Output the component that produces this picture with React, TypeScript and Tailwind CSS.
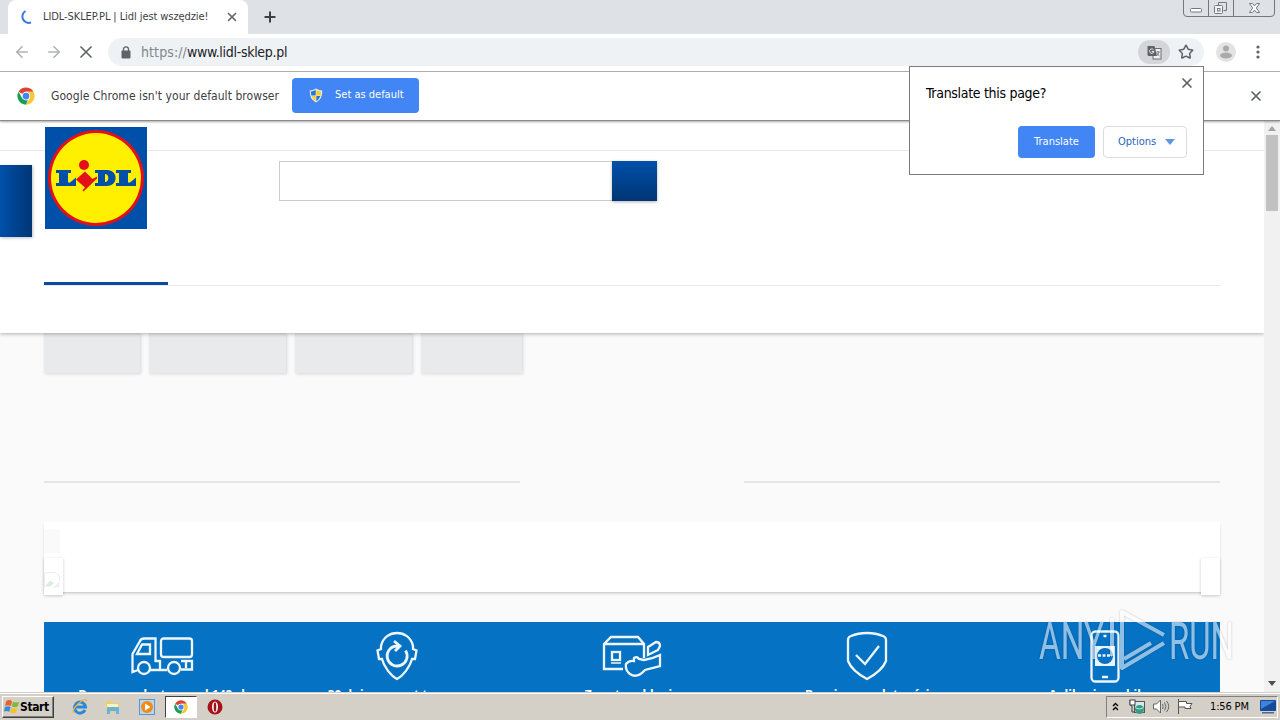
import * as React from "react";
import { X, Plus, ArrowLeft, ArrowRight, Star } from "lucide-react";

function ChromeLogo({ size }: { size: number }) {
  return (
    <svg width={size} height={size} viewBox="0 0 48 48" className="shrink-0">
      <circle cx="24" cy="24" r="23" fill="#fff" />
      <path d="M24 24 4.1 12.5A23 23 0 0 1 43.9 12.5H24Z" fill="#db4437" />
      <path d="M24 12.5h19.9A23 23 0 0 1 24 47l10-17.3Z" fill="#fbc62f" />
      <path d="M4.1 12.5 14 29.7l10 5.8 5-1L24 47A23 23 0 0 1 4.1 12.5Z" fill="#1a9c58" />
      <circle cx="24" cy="24" r="11.5" fill="#fff" />
      <circle cx="24" cy="24" r="9" fill="#4486f4" />
    </svg>
  );
}

function TabStrip() {
  return (
    <div className="flex h-[34px] shrink-0 items-start bg-[#dee1e6] pl-2">
      <div className="flex h-[34px] w-[240px] items-center rounded-t-lg bg-white pl-3">
        <svg width="14" height="16" viewBox="0 0 14 16" className="shrink-0" fill="none">
          <path d="M5.500 2A6.400 6.400 0 0 0 11 13.500" stroke="#3b78e7" strokeWidth="2" />
        </svg>
        <span className="ml-[9px] w-[166px] text-[11px] tracking-[-0.08px] whitespace-nowrap text-[#3c4043]">
          LIDL-SKLEP.PL | Lidl jest wszędzie!
        </span>
        <X className="ml-[16px] size-3.5 text-[#5f6368]" strokeWidth={2.6} />
      </div>
      <Plus className="mt-[9px] ml-[14px] size-4 text-[#3c4043]" strokeWidth={3} />
      <svg width="94" height="18" className="mr-[4px] ml-auto" fill="none" stroke="#74787f">
        <path d="M1.500 0v13q0 3.500 3.500 3.500h84q3.500 0 3.500-3.500V0M26.500 0v16M51.500 0v16" />
        <rect x="8.500" y="8.500" width="11" height="3.500" rx="1" fill="#fff" />
        <path d="M36.500 5.500v-3h8v8h-3" />
        <rect x="32.500" y="5.500" width="8" height="8" rx="1" fill="#f4f5f7" />
        <rect x="35.500" y="8.500" width="2.500" height="2.500" />
        <path d="M67.500 3.500h3l2 2.500 2-2.500h3l-3.200 4.500 3.200 4.500h-3l-2-2.500-2 2.500h-3l3.200-4.500Z" fill="#fff" />
      </svg>
    </div>
  );
}

function Toolbar() {
  return (
    <div className="flex h-[38px] shrink-0 items-center border-b border-[#b3b3b3] bg-white pb-px pl-[13px]">
      <ArrowLeft className="size-[18px] text-[#b0b2b5]" strokeWidth={2.2} />
      <ArrowRight className="ml-[14px] size-[18px] text-[#b0b2b5]" strokeWidth={2.2} />
      <X className="ml-[13px] size-5 text-[#5f6368]" strokeWidth={2} />
      <div className="ml-3 flex h-7 w-[1096px] items-center rounded-full bg-[#eff2f5] pl-[13px]">
        <svg width="10" height="13" viewBox="0 0 10 13" className="shrink-0">
          <rect x="0.500" y="4.500" width="9" height="8" rx="1" fill="#5f6368" />
          <path d="M2.500 5V3.300a2.500 2.500 0 0 1 5 0V5" fill="none" stroke="#5f6368" strokeWidth="1.300" />
        </svg>
        <span className="ml-[10px] w-[147px] text-[14px] tracking-[-0.3px] whitespace-nowrap text-[#202124]">
          <span className="tracking-[0.1px] text-[#80868b]">https://</span>www.lidl-sklep.pl
        </span>
        <div className="ml-auto flex h-6 w-8 items-center justify-center rounded-full bg-[#d3d5d8]">
          <svg width="15" height="15" viewBox="0 0 15 15">
            <rect x="6" y="3.500" width="8" height="10.500" fill="#eee" stroke="#6b6f73" />
            <path d="M0.500 1h7l2.500 10H2a1.500 1.500 0 0 1-1.500-1.500Z" fill="#5f6368" />
            <path d="M6.500 4.700A2.200 2.200 0 1 0 7 6.500H4.800" fill="none" stroke="#eee" />
            <path d="M8.800 7h4M11 6v1M12 7q-.5 2.500-2.500 4M9.800 8q1 2 2.700 3" fill="none" stroke="#6b6f73" strokeWidth=".8" />
          </svg>
        </div>
        <Star className="mr-[10px] ml-2 size-4 text-[#5f6368]" strokeWidth={2.3} />
      </div>
      <svg width="20" height="20" viewBox="0 0 20 20" className="ml-3">
        <circle cx="10" cy="10" r="10" fill="#e3e3e3" />
        <circle cx="10" cy="6.500" r="3" fill="#aaa" />
        <ellipse cx="10" cy="13.500" rx="6" ry="3" fill="#aaa" />
      </svg>
      <svg width="4" height="14" className="ml-[20px]" fill="#5f6368">
        <circle cx="2" cy="2" r="1.600" />
        <circle cx="2" cy="7" r="1.600" />
        <circle cx="2" cy="12" r="1.600" />
      </svg>
    </div>
  );
}

function InfoBar() {
  return (
    <div className="z-20 flex h-[49px] shrink-0 items-center border-b border-[#8b8b8b] bg-white pb-px pl-[17px] shadow-[0_1px_2px_rgba(0,0,0,0.35)]">
      <ChromeLogo size={18} />
      <span className="ml-4 w-[241px] text-[12px] tracking-[0.06px] whitespace-nowrap text-[#3c4043]">
        Google Chrome isn't your default browser
      </span>
      <button className="flex h-[35px] w-[127px] items-center rounded bg-[#4285f4] pl-[17px] text-[11px] text-white">
        <svg width="14" height="15" viewBox="0 0 14 15" className="mr-[12px]">
          <path d="M7 .5Q4 2.500.8 2.500 0 10.500 7 14.500 14 10.500 13.200 2.500 10 2.500 7 .5Z" fill="#e8eef5" />
          <path d="M6.700 1.800Q4.500 3.300 1.900 3.500q-.1 2.200.5 4h4.300Z" fill="#2c74c9" />
          <path d="M7.300 1.800q2.200 1.500 4.800 1.700.1 2.200-.5 4H7.300Z" fill="#f7cf29" />
          <path d="M6.700 8H2.600q1.200 3.500 4.100 5.300Z" fill="#f7cf29" />
          <path d="M7.300 8h4.100q-1.200 3.500-4.100 5.300Z" fill="#2c74c9" />
        </svg>
        <span className="whitespace-nowrap">Set as default</span>
      </button>
      <X className="mr-4 ml-auto size-4 text-[#5f6368]" strokeWidth={2.6} />
    </div>
  );
}

function TranslateBubble() {
  return (
    <div className="absolute top-[66px] left-[909px] z-30 flex h-[109px] w-[295px] flex-col border border-[#7b7b7b] bg-white">
      <div className="flex h-[59px] items-start justify-between pr-2 pl-4">
        <span className="mt-[17px] text-[14px] leading-[18px] tracking-[-0.3px] whitespace-nowrap text-black">
          Translate this page?
        </span>
        <X className="mt-2 size-4 text-[#5f6368]" strokeWidth={2.6} />
      </div>
      <div className="flex justify-end gap-2 pr-4 text-[11px]">
        <button className="h-8 w-[77px] rounded bg-[#4285f4] text-white">Translate</button>
        <button className="flex h-8 w-[84px] items-center rounded border border-[#dadce0] pl-[14px] text-[#2a66c0]">
          <span className="w-[47px] text-left">Options</span>
          <svg width="10" height="6" fill="#5b98dd">
            <path d="M0 0h10L5 6Z" />
          </svg>
        </button>
      </div>
    </div>
  );
}

function LidlLogo() {
  return (
    <svg width="102" height="102" viewBox="0 0 102 102" className="shrink-0">
      <rect width="102" height="102" fill="#0050aa" />
      <circle cx="51" cy="51" r="48" fill="#e3101c" />
      <circle cx="51" cy="51" r="45" fill="#fff000" />
      <g fill="#0050aa">
        <path d="M11 43h15v3h-3v9.500h2l6-5V59H11v-3h3V46h-3Z" />
        <path d="M50 43h12c11.500 0 11.500 16 0 16H50v-3h3V46h-3Zm10 4v8c4.500 0 4.500-8 0-8Z" fillRule="evenodd" />
        <path d="M71 43h15v3h-3v9.500h2l6-5V59H71v-3h3V46h-3Z" />
      </g>
      <circle cx="39" cy="38" r="5" fill="#e3101c" />
      <path d="m40 44.500 7.500 7.500 4.500-2.500v2L38.500 64.500l-1-1 2.500-3L31 52.500Z" fill="#e3101c" />
    </svg>
  );
}

function ShopHeader() {
  return (
    <header className="relative z-10 h-[212px] shrink-0 bg-white shadow-[0_1px_4px_rgba(0,0,0,0.3)]">
      <div className="h-[30px] border-b border-[#e8e8e8]" />
      <div className="absolute top-[44px] left-0 h-[72px] w-8 bg-linear-to-r from-[#0050aa] to-[#003575] shadow-[1px_1px_3px_rgba(0,0,0,0.25)]" />
      <div className="-mt-6 flex pl-[45px]">
        <LidlLogo />
        <div className="mt-[34px] ml-[132px] flex h-10">
          <div className="w-[333px] border border-r-0 border-[#ccc] bg-white" />
          <div className="w-[45px] bg-linear-to-b from-[#0050aa] to-[#003575] shadow-[0_1px_3px_rgba(0,0,0,0.3)]" />
        </div>
      </div>
      <div className="mx-[44px] mt-[53px] h-1 border-b border-[#e8e8e8]">
        <div className="h-[3px] w-[124px] bg-[#0a4aa0]" />
      </div>
    </header>
  );
}

const icons: Record<string, React.ReactNode> = {
  truck: (
    <svg width="64" height="40" viewBox="0 0 64 40">
      <path d="M8 34 2.500 36V18L10 5q1-2.500 4-2.500h11.500V26M7 18l5-9.500h8V18Zm13 16h17M25 25h5v9M51 25h11v8.500H51M56 25v7" />
      <rect x="31" y="2.500" width="31" height="18.500" rx="2.500" />
      <circle cx="14" cy="32" r="6" />
      <circle cx="44" cy="32" r="6" />
    </svg>
  ),
  returns: (
    <svg width="44" height="50" viewBox="0 0 44 50">
      <path d="M6 18v-3C8 6 15 2 22 2s14 4 16 13v3l3.500 1.500L40 28h-3c-2 8-9 17-15 20-6-3-13-12-15-20H4l-1.500-8.500Z" />
      <path d="M30.500 19.500a10 10 0 1 1-9-4.500h4M19 10l6 5-5 5" strokeWidth="2.800" />
    </svg>
  ),
  box: (
    <svg width="60" height="43" viewBox="0 0 60 43">
      <path d="M21 34H2V9l7-7h27l6 7v14M2 9h40" />
      <rect x="10" y="17" width="8" height="8" />
      <path d="M9 28h10" strokeWidth="1.500" />
      <path d="M24 29q3-4 8-3v-3q3-2 5 1l5 1q8-1 16-5v11l-15 4q-8 9-15 4-5-4-4-10ZM46 12l8-5q4 0 4 4l-2 4-10 5Z" />
    </svg>
  ),
  shield: (
    <svg width="42" height="50" viewBox="0 0 42 50">
      <path d="M21 2q9 0 16 3 3 1 3 4v21q-4 10-19 18Q6 40 2 30V9q0-3 3-4 7-3 16-3Z" />
      <path d="m10 24 9 9 14-18" />
    </svg>
  ),
  phone: (
    <svg width="30" height="53" viewBox="0 0 30 53" className="ml-1.5">
      <rect x="1.500" y="1.500" width="27" height="50" rx="4" />
      <path d="M13.500 6h3M12 47h6" />
      <rect x="5" y="16" width="20" height="20" fill="#e9f3fb" stroke="none" />
      <circle cx="15" cy="26" r="8" fill="#0672c4" stroke="none" />
      <path d="M8 25.500h14" strokeDasharray="3 1.500" />
    </svg>
  ),
};

const benefits = [
  { icon: "truck", label: "Darmowa dostawa od 149 zł" },
  { icon: "returns", label: "30 dni na zwrot towaru" },
  { icon: "box", label: "Zwrot w sklepie" },
  { icon: "shield", label: "Bezpieczne płatności" },
  { icon: "phone", label: "Aplikacja mobilna" },
];

function Shop() {
  return (
    <div className="flex h-[571px] shrink-0">
      <main className="flex w-[1264px] flex-col overflow-hidden bg-[#fafafa]">
        <ShopHeader />
        <div className="flex h-10 shrink-0 gap-[9px] pl-[44px]">
          <div className="w-24 bg-[#e8eaec] shadow-[1px_1px_3px_rgba(0,0,0,0.15)]" />
          <div className="w-[137px] bg-[#e8eaec] shadow-[1px_1px_3px_rgba(0,0,0,0.15)]" />
          <div className="w-[117px] bg-[#e8eaec] shadow-[1px_1px_3px_rgba(0,0,0,0.15)]" />
          <div className="w-[101px] bg-[#e8eaec] shadow-[1px_1px_3px_rgba(0,0,0,0.15)]" />
        </div>
        <div className="mx-[44px] mt-[108px] flex shrink-0 justify-between">
          <div className="h-0.5 w-[476px] bg-[#e5e5e5]" />
          <div className="h-0.5 w-[476px] bg-[#e5e5e5]" />
        </div>
        <div className="mx-[44px] mt-[39px] flex h-[70px] shrink-0 items-end justify-between bg-white shadow-[0_2px_3px_-1px_rgba(0,0,0,0.25)]">
          <div className="-mb-[3px] flex h-[66px] w-[19px] flex-col justify-between">
            <div className="h-6 w-4 bg-[#fafafa]" />
            <div className="flex h-[37px] items-end bg-white pb-[7px] shadow-[0_1px_3px_rgba(0,0,0,0.2)]">
              <svg width="16" height="16" viewBox="0 0 16 16" fill="none">
                <path d="M.5 15.500V.5h11l4 4V9" stroke="#ededed" />
                <path d="m1 14.500 5-6 4 2.500-4 3.500Z" fill="#dfeadf" />
                <path d="m9 15.500 6.500-6v6Z" fill="#f1f1f1" />
              </svg>
            </div>
          </div>
          <div className="-mb-[3px] h-[37px] w-[19px] bg-white shadow-[0_1px_3px_rgba(0,0,0,0.2)]" />
        </div>
        <div className="mx-[44px] mt-[30px] grid h-[71px] shrink-0 grid-cols-5 overflow-hidden bg-[#0672c4]">
          {benefits.map((b) => (
            <div key={b.icon} className="flex flex-col items-center text-white">
              <div className="flex h-[68px] shrink-0 items-center fill-none stroke-[#eef6fc] stroke-[2.3]">
                {icons[b.icon]}
              </div>
              <span className="-mt-[5px] font-['Open_Sans',sans-serif] text-[12px] leading-[20px] font-bold whitespace-nowrap">
                {b.label}
              </span>
            </div>
          ))}
        </div>
      </main>
      <div className="flex w-4 flex-col items-center bg-[#f1f1f1] pt-[5px]">
        <svg width="8" height="5" fill="#a3a3a3">
          <path d="M0 5h8L4 0Z" />
        </svg>
        <div className="mt-1 h-[76px] w-3 bg-[#c1c1c1]" />
        <svg width="8" height="5" fill="#505050" className="mt-auto mb-[6px]">
          <path d="M0 0h8L4 5Z" />
        </svg>
      </div>
    </div>
  );
}

function Watermark() {
  return (
    <svg width="200" height="66" className="absolute top-[608px] left-[1036px] z-30 opacity-55" fill="none">
      <g fill="#fff" fontFamily="Roboto" fontWeight="400" fontSize="51" className="drop-shadow-[0_0_1px_rgba(0,0,0,0.4)]">
        <text x="3" y="51" textLength="65" lengthAdjust="spacingAndGlyphs">ANY</text>
        <text x="133" y="51" textLength="65" lengthAdjust="spacingAndGlyphs">RUN</text>
      </g>
      <path
        d="M76 48V10M86 50V4l42 23M115 35 88 51M128 35 86 60V50"
        stroke="#fff"
        strokeWidth="4"
        strokeLinejoin="round"
        className="drop-shadow-[0_0_1px_rgba(0,0,0,0.4)]"
      />
    </svg>
  );
}

function Taskbar() {
  return (
    <footer className="z-20 flex h-7 shrink-0 items-center border-t border-[#d4d0c8] bg-[#d4d0c8] pl-0.5 shadow-[inset_0_1px_0_#fff]">
      <button className="flex h-[22px] w-[52px] items-center border border-t-white border-r-[#404040] border-b-[#404040] border-l-white pl-px text-[12px] font-bold text-black shadow-[inset_-1px_-1px_0_#808080]">
        <svg width="16" height="15" viewBox="0 0 15 14" className="shrink-0">
          <path d="M2 2q3-2 5.500 0L6.500 6.500q-3-1.500-5.500 0Z" fill="#e8602c" />
          <path d="M8.300 2.500q3 1.500 6 0l-1.500 4.500q-3 1.500-5.500-.3Z" fill="#7fb83a" />
          <path d="M.8 7.500q3-1.500 5.500 0L5 12q-3-1.500-5 0Z" fill="#3b8ad8" />
          <path d="M7 8q2.500 1.500 5.500.2L11 13q-3 1-5.200-.6Z" fill="#f6c02c" />
        </svg>
        <span className="tracking-[-0.4px]">Start</span>
      </button>
      <svg width="16" height="16" viewBox="0 0 16 16" className="ml-[18px]" fill="none">
        <path d="M13 11a5.500 5.500 0 1 1 .5-3H4" stroke="#2d87d8" strokeWidth="3" />
        <path d="M2 14Q-1 12 6 5t9-3" stroke="#e9b93b" strokeWidth="1.300" />
      </svg>
      <svg width="16" height="16" viewBox="0 0 16 16" className="ml-[17px]">
        <path d="M1 2h5l1 2h7v9H1Z" fill="#edcf6d" />
        <path d="M2 5h11v3H2Z" fill="#fff3bd" />
        <path d="M2 15V9q0-1 1-1h10q1 0 1 1v6h-3v-3H5v3Z" fill="#66b4dc" />
      </svg>
      <svg width="16" height="16" viewBox="0 0 16 16" className="ml-[18px]">
        <rect x=".5" y=".5" width="15" height="15" fill="#b8d7ee" stroke="#5498cf" />
        <circle cx="8" cy="8" r="6" fill="#f28a1b" />
        <path d="m6 4.500 5.500 3.500L6 11.500Z" fill="#fff" />
      </svg>
      <div className="ml-[10px] flex h-[22px] w-8 items-center justify-center border border-t-[#404040] border-r-white border-b-white border-l-[#404040] bg-white">
        <ChromeLogo size={14} />
      </div>
      <svg width="16" height="16" viewBox="0 0 16 16" className="ml-[10px]">
        <circle cx="8" cy="8" r="7.500" fill="#a51318" />
        <ellipse cx="8" cy="8" rx="3" ry="5.500" fill="#fff" />
        <ellipse cx="8" cy="8" rx="1.300" ry="4.800" fill="#a51318" />
      </svg>
      <div className="mr-[2px] ml-auto flex h-[22px] w-[172px] items-center border border-t-[#808080] border-r-white border-b-white border-l-[#808080] pl-[5px] text-[11px] text-black">
        <svg width="7" height="9" fill="none" stroke="#000" strokeWidth="1.400">
          <path d="m1 4 2.500-2.500L6 4M1 8l2.500-2.500L6 8" />
        </svg>
        <svg width="17" height="16" viewBox="0 0 17 16" className="ml-[10px]">
          <rect x="5.500" y="2.500" width="10" height="11" fill="#d7e7ee" stroke="#555" />
          <path d="M1 1v4q0 2 2 2v6h3" fill="none" stroke="#444" />
          <rect x="1" y="1" width="5" height="5" fill="#fff" stroke="#444" />
          <circle cx="10.500" cy="10.500" r="4.500" fill="#359c86" />
          <path d="M7 9q3 2 7 0" stroke="#bde7d8" fill="none" />
        </svg>
        <svg width="17" height="15" viewBox="0 0 17 15" className="ml-[7px]" fill="none" stroke="#666">
          <path d="M.5 5h3L7.500 1v13L3.500 10h-3Z" fill="#fff" />
          <path d="M9.500 5q1.500 2.500 0 5M11.500 3.500q3 4 0 8M13.500 2q4.500 5.500 0 11" />
        </svg>
        <svg width="16" height="15" viewBox="0 0 16 15" className="ml-[7px]" fill="#fff" stroke="#555">
          <path d="M1.500 0v15" />
          <path d="M1.500 2.500h8v2h5.500l-2 3 1 2H8v-1.500H1.500Z" />
        </svg>
        <span className="mt-px ml-[17px] w-[41px] text-[11px] tracking-[-0.15px] whitespace-nowrap">1:56 PM</span>
        <svg width="16" height="14" viewBox="0 0 16 14" className="ml-[9px]">
          <rect width="16" height="11" rx="1" fill="#164b9c" />
          <path d="M1 1h14L1 9Z" fill="#3f83d6" />
          <path d="M2 12h12v1.500H2Z" fill="#546a8a" />
        </svg>
      </div>
    </footer>
  );
}

export default function App() {
  return (
    <div className="relative flex h-[720px] w-[1280px] flex-col overflow-hidden bg-white font-['DejaVu_Sans_Condensed','DejaVu_Sans',sans-serif]">
      <TabStrip />
      <Toolbar />
      <InfoBar />
      <Shop />
      <Taskbar />
      <TranslateBubble />
      <Watermark />
    </div>
  );
}
